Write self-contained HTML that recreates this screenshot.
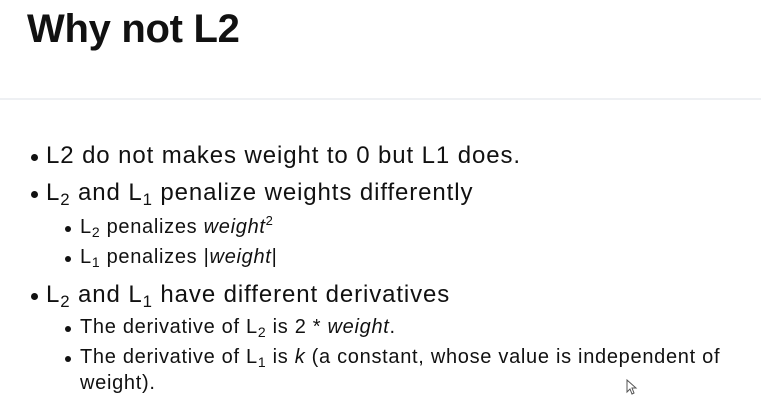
<!DOCTYPE html>
<html><head><style>
body{margin:0;width:761px;height:415px;background:#fff;overflow:hidden;position:relative;font-family:"Liberation Sans",sans-serif;color:#111}
.t{position:absolute;left:27px;top:7px;font-size:40px;font-weight:bold;letter-spacing:-0.3px}
.hr{position:absolute;left:0;top:98px;width:761px;height:2px;background:#eef0f3}
.l{position:absolute;white-space:nowrap}
.m{font-size:24px;left:46px;letter-spacing:0.9px}
.s{font-size:20px;left:80px;letter-spacing:0.7px}
.b{position:absolute;border-radius:50%;background:#111}
sub{font-size:0.7em;vertical-align:-0.3em;line-height:0}
sup{font-size:0.65em;vertical-align:0.6em;line-height:0}
</style></head><body>
<div class="t">Why not L2</div>
<div class="hr"></div>
<div class="b" style="left:31px;top:154px;width:7px;height:7px"></div>
<div class="l m" style="top:142px">L2 do not makes weight to 0 but L1 does.</div>
<div class="b" style="left:31px;top:191px;width:7px;height:7px"></div>
<div class="l m" style="top:179px">L<sub>2</sub> and L<sub>1</sub> penalize weights differently</div>
<div class="b" style="left:65px;top:226px;width:6px;height:6px"></div>
<div class="l s" style="top:216px">L<sub>2</sub> penalizes <i>weight</i><sup>2</sup></div>
<div class="b" style="left:65px;top:256px;width:6px;height:6px"></div>
<div class="l s" style="top:246px">L<sub>1</sub> penalizes |<i>weight</i>|</div>
<div class="b" style="left:31px;top:293px;width:7px;height:7px"></div>
<div class="l m" style="top:281px">L<sub>2</sub> and L<sub>1</sub> have different derivatives</div>
<div class="b" style="left:65px;top:326px;width:6px;height:6px"></div>
<div class="l s" style="top:316px">The derivative of L<sub>2</sub> is 2 * <i>weight</i>.</div>
<div class="b" style="left:65px;top:356px;width:6px;height:6px"></div>
<div class="l s" style="top:346px">The derivative of L<sub>1</sub> is <i>k</i> (a constant, whose value is independent of</div>
<div class="l s" style="top:372px">weight).</div>
<svg style="position:absolute;left:626px;top:379px" width="12" height="16" viewBox="0 0 12 16"><path d="M1 1 L1 13 L4 10 L6 15 L8 14 L6 9 L10 9 Z" fill="#fff" stroke="#555" stroke-width="1"/></svg>
</body></html>
